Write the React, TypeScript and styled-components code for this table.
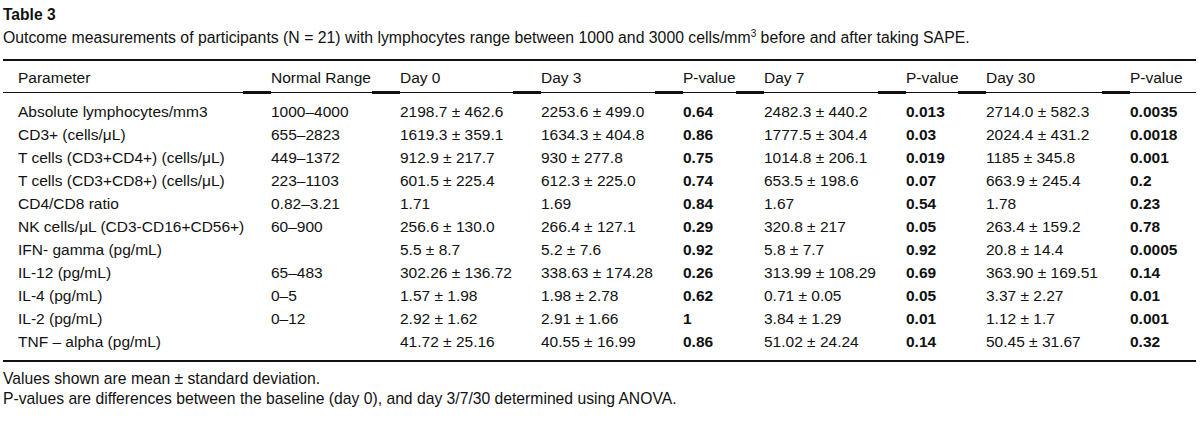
import React from "react";
import styled, { createGlobalStyle } from "styled-components";

const GlobalStyle = createGlobalStyle`
  html, body {
    margin: 0;
    padding: 0;
    background: #fff;
  }
  body {
    font-family: "Liberation Sans", Arial, sans-serif;
    color: #111;
  }
`;

type Row = {
  name: string;
  range: string;
  d0: string;
  d3: string;
  p3: string;
  d7: string;
  p7: string;
  d30: string;
  p30: string;
};

const rows: Row[] = [
  { name: "Absolute lymphocytes/mm3", range: "1000–4000", d0: "2198.7 ± 462.6", d3: "2253.6 ± 499.0", p3: "0.64", d7: "2482.3 ± 440.2", p7: "0.013", d30: "2714.0 ± 582.3", p30: "0.0035" },
  { name: "CD3+ (cells/μL)", range: "655–2823", d0: "1619.3 ± 359.1", d3: "1634.3 ± 404.8", p3: "0.86", d7: "1777.5 ± 304.4", p7: "0.03", d30: "2024.4 ± 431.2", p30: "0.0018" },
  { name: "T cells (CD3+CD4+) (cells/μL)", range: "449–1372", d0: "912.9 ± 217.7", d3: "930 ± 277.8", p3: "0.75", d7: "1014.8 ± 206.1", p7: "0.019", d30: "1185 ± 345.8", p30: "0.001" },
  { name: "T cells (CD3+CD8+) (cells/μL)", range: "223–1103", d0: "601.5 ± 225.4", d3: "612.3 ± 225.0", p3: "0.74", d7: "653.5 ± 198.6", p7: "0.07", d30: "663.9 ± 245.4", p30: "0.2" },
  { name: "CD4/CD8 ratio", range: "0.82–3.21", d0: "1.71", d3: "1.69", p3: "0.84", d7: "1.67", p7: "0.54", d30: "1.78", p30: "0.23" },
  { name: "NK cells/μL (CD3-CD16+CD56+)", range: "60–900", d0: "256.6 ± 130.0", d3: "266.4 ± 127.1", p3: "0.29", d7: "320.8 ± 217", p7: "0.05", d30: "263.4 ± 159.2", p30: "0.78" },
  { name: "IFN- gamma (pg/mL)", range: "", d0: "5.5 ± 8.7", d3: "5.2 ± 7.6", p3: "0.92", d7: "5.8 ± 7.7", p7: "0.92", d30: "20.8 ± 14.4", p30: "0.0005" },
  { name: "IL-12 (pg/mL)", range: "65–483", d0: "302.26 ± 136.72", d3: "338.63 ± 174.28", p3: "0.26", d7: "313.99 ± 108.29", p7: "0.69", d30: "363.90 ± 169.51", p30: "0.14" },
  { name: "IL-4 (pg/mL)", range: "0–5", d0: "1.57 ± 1.98", d3: "1.98 ± 2.78", p3: "0.62", d7: "0.71 ± 0.05", p7: "0.05", d30: "3.37 ± 2.27", p30: "0.01" },
  { name: "IL-2 (pg/mL)", range: "0–12", d0: "2.92 ± 1.62", d3: "2.91 ± 1.66", p3: "1", d7: "3.84 ± 1.29", p7: "0.01", d30: "1.12 ± 1.7", p30: "0.001" },
  { name: "TNF – alpha (pg/mL)", range: "", d0: "41.72 ± 25.16", d3: "40.55 ± 16.99", p3: "0.86", d7: "51.02 ± 24.24", p7: "0.14", d30: "50.45 ± 31.67", p30: "0.32" },
];

const widths = [240, 129, 141, 142, 81, 142, 80, 144, 94];
const headers = ["Parameter", "Normal Range", "Day 0", "Day 3", "P-value", "Day 7", "P-value", "Day 30", "P-value"];

const Page = styled.div`
  padding: 6px 0 0 3px;
  width: 1193px;
`;

const Title = styled.div`
  font-weight: bold;
  font-size: 15.6px;
  line-height: 18px;
`;

const Caption = styled.div`
  font-size: 15.8px;
  line-height: 18px;
  margin-top: 5px;

  sup {
    font-size: 10px;
    line-height: 0;
  }
`;

const Table = styled.table`
  width: 1193px;
  table-layout: fixed;
  border-collapse: collapse;
  margin-top: 12px;
  border-top: 2px solid #111;
  border-bottom: 2px solid #111;
  font-size: 15.5px;
`;

const rule = "linear-gradient(#111, #111)";

// header rule: thin line across, heavier stub under each column gap
const Th = styled.th<{ $first?: boolean }>`
  text-align: left;
  font-weight: normal;
  white-space: nowrap;
  height: 33px;
  padding: 0 0 0 ${(p) => (p.$first ? 15 : 28)}px;
  background: ${(p) =>
    p.$first
      ? `${rule} left calc(100% - 1px) / 100% 1px no-repeat`
      : `${rule} left bottom / 28px 3px no-repeat, ${rule} left calc(100% - 1px) / 100% 1px no-repeat`};
`;

const Td = styled.td<{ $first?: boolean; $bold?: boolean }>`
  padding: 0 0 0 ${(p) => (p.$first ? 15 : 28)}px;
  height: 23px;
  white-space: nowrap;
  font-weight: ${(p) => (p.$bold ? "bold" : "normal")};
`;

const SpacerCell = styled.td<{ $h: number }>`
  height: ${(p) => p.$h}px;
  padding: 0;
`;

const Notes = styled.div`
  font-size: 15.7px;
  line-height: 20px;
  margin-top: 7px;
`;

const Spacer = ({ h }: { h: number }) => (
  <tr>
    <SpacerCell colSpan={9} $h={h} />
  </tr>
);

export default function App() {
  return (
    <>
      <GlobalStyle />
      <Page>
        <Title>Table 3</Title>
        <Caption>
          Outcome measurements of participants (N = 21) with lymphocytes range between 1000 and 3000 cells/mm
          <sup>3</sup> before and after taking SAPE.
        </Caption>
        <Table>
          <colgroup>
            {widths.map((w, i) => (
              <col key={i} style={{ width: w }} />
            ))}
          </colgroup>
          <thead>
            <tr>
              {headers.map((h, i) => (
                <Th key={i} $first={i === 0}>
                  {h}
                </Th>
              ))}
            </tr>
          </thead>
          <tbody>
            <Spacer h={6} />
            {rows.map((r) => (
              <tr key={r.name}>
                <Td $first>{r.name}</Td>
                <Td>{r.range}</Td>
                <Td>{r.d0}</Td>
                <Td>{r.d3}</Td>
                <Td $bold>{r.p3}</Td>
                <Td>{r.d7}</Td>
                <Td $bold>{r.p7}</Td>
                <Td>{r.d30}</Td>
                <Td $bold>{r.p30}</Td>
              </tr>
            ))}
            <Spacer h={7} />
          </tbody>
        </Table>
        <Notes>
          Values shown are mean ± standard deviation.
          <br />
          P-values are differences between the baseline (day 0), and day 3/7/30 determined using ANOVA.
        </Notes>
      </Page>
    </>
  );
}
